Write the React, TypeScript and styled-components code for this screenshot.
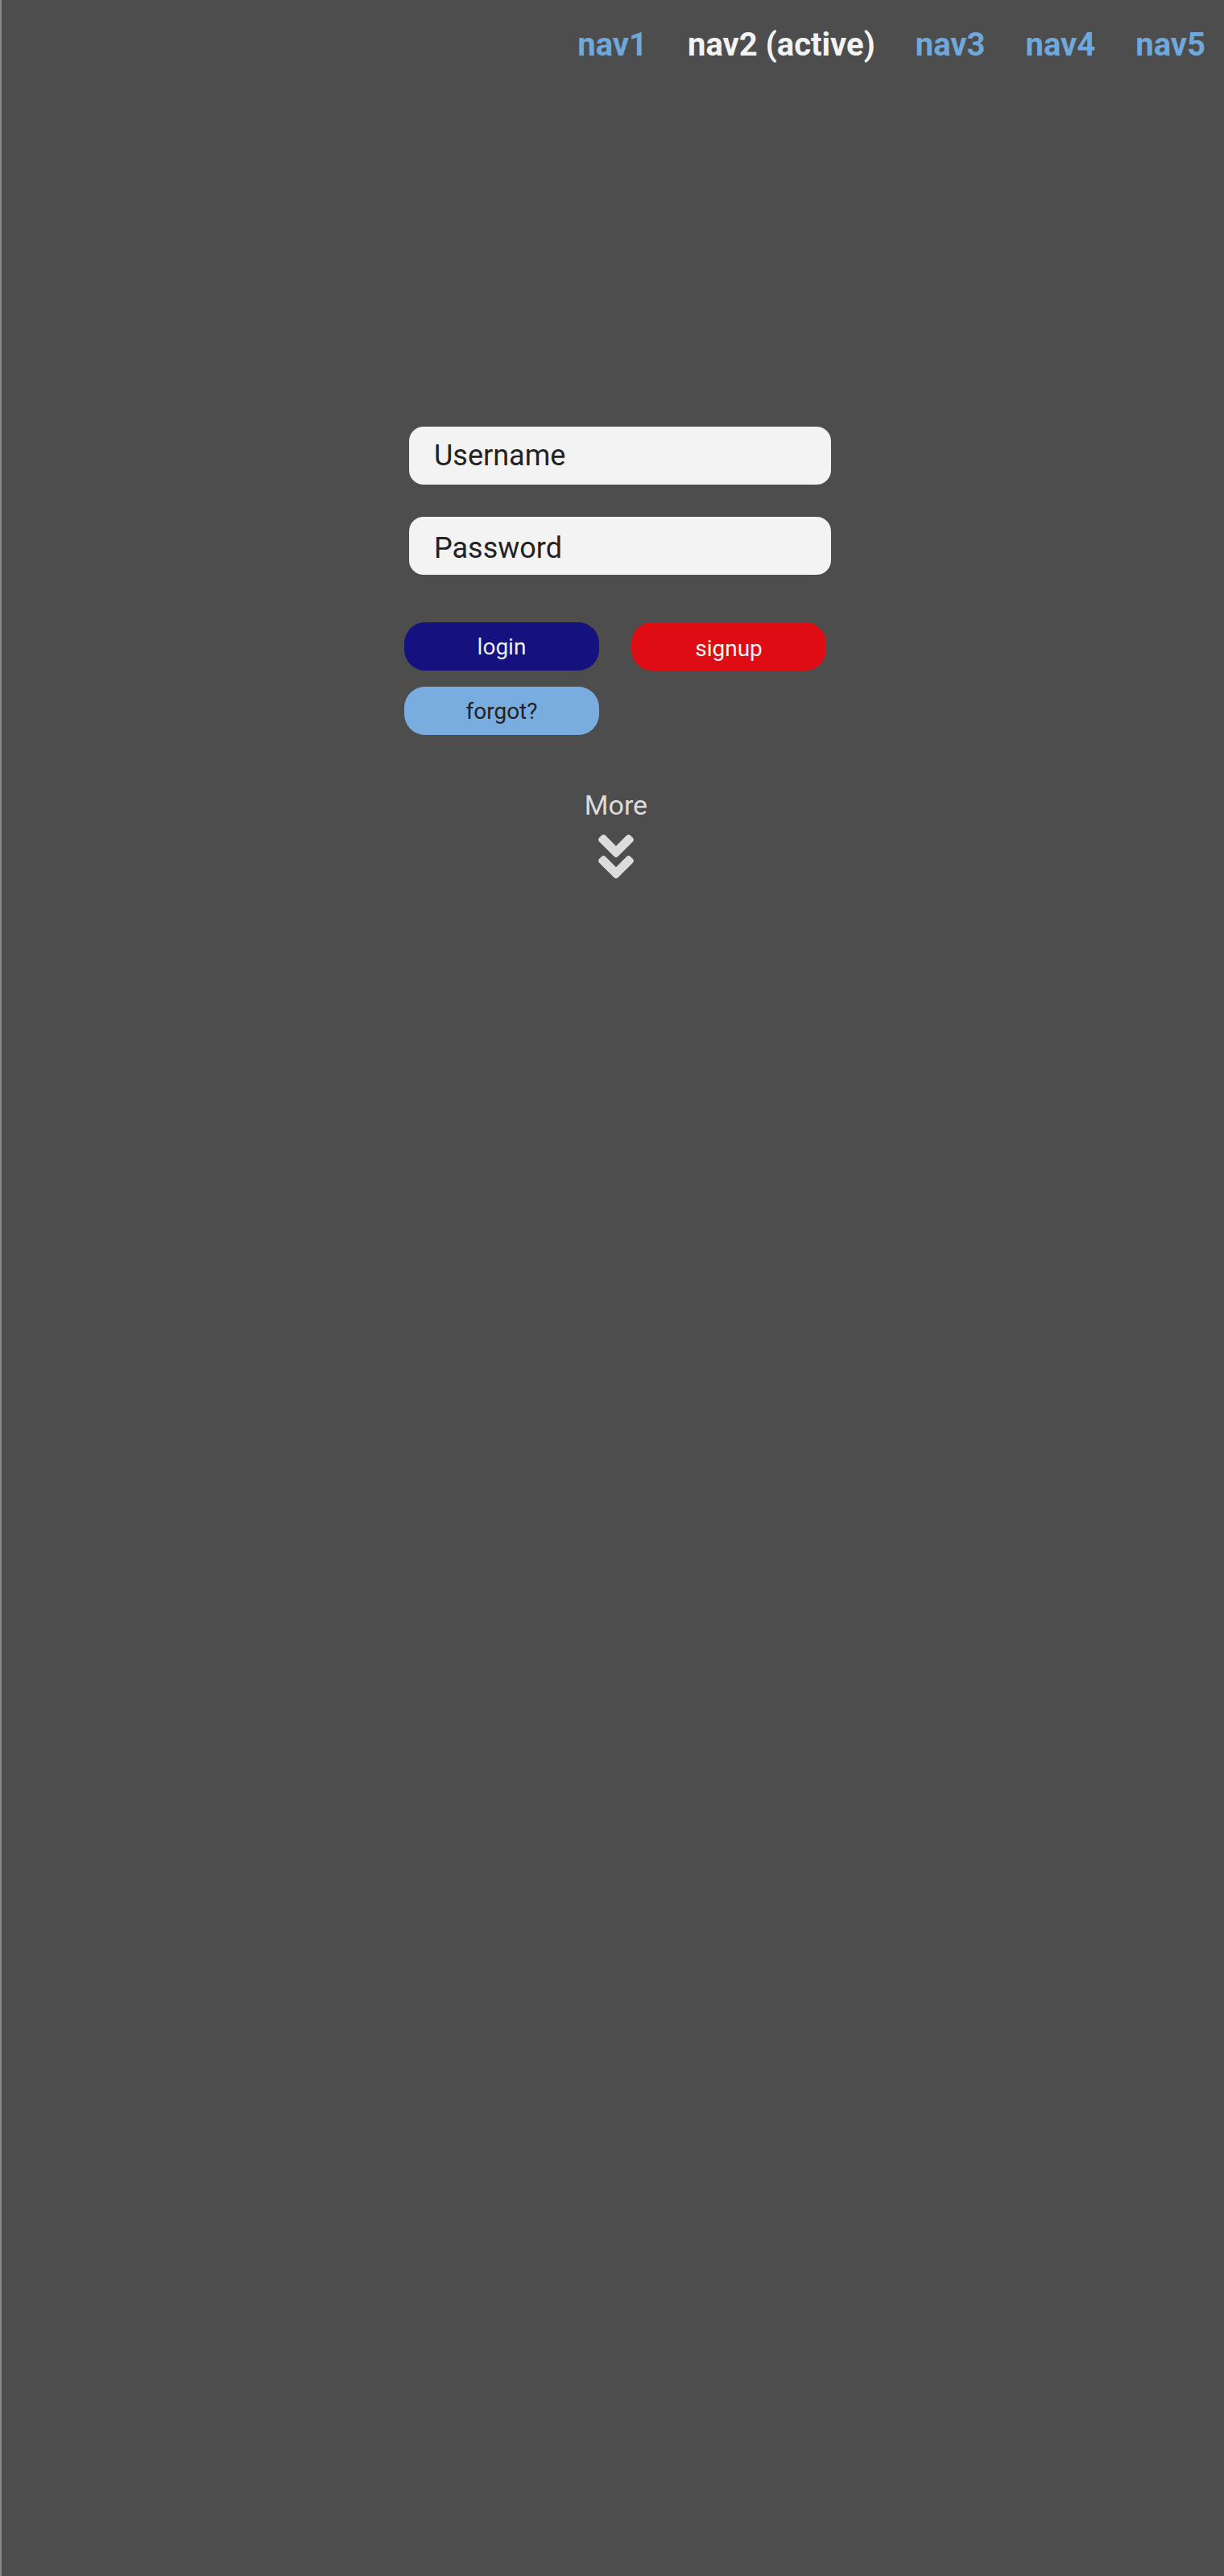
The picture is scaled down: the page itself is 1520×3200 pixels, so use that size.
import React from "react";
import styled, { createGlobalStyle } from "styled-components";
import { FaAngleDoubleDown } from "react-icons/fa";

const GlobalStyle = createGlobalStyle`
  html, body {
    margin: 0;
    padding: 0;
  }
  body {
    background: #4d4d4d;
    border-left: 2px solid #888888;
    font-family: Roboto, "Liberation Sans", Arial, sans-serif;
  }
  * { box-sizing: border-box; }
`;

const Page = styled.div`
  min-height: 3200px;
  display: flex;
  flex-direction: column;
`;

const Nav = styled.nav`
  display: flex;
  justify-content: flex-end;
  gap: 50px;
  padding: 32px 23px 0 0;
`;

const NavLink = styled.a<{ $active?: boolean }>`
  font-size: 40px;
  line-height: normal;
  font-weight: 700;
  text-decoration: none;
  color: ${(p) => (p.$active ? "#f3f3f3" : "#6fa8dc")};
  cursor: pointer;
`;

const Form = styled.form`
  width: 530px;
  margin: 451px 0 0 calc(50% - 259px);
  display: flex;
  flex-direction: column;
`;

const Field = styled.input<{ $drop?: number }>`
  width: 524px;
  height: 72px;
  margin: 0 0 0 6px;
  padding: ${(p) => p.$drop ?? 0}px 0 0 31px;
  border: none;
  border-radius: 18px;
  background: #f3f3f3;
  font-family: Roboto, "Liberation Sans", Arial, sans-serif;
  font-size: 36px;
  color: #222;
  outline: none;
  & + & {
    margin-top: 40px;
  }
  &::placeholder {
    color: #222;
    opacity: 1;
  }
`;

const Buttons = styled.div`
  display: grid;
  grid-template-columns: 242px 242px;
  column-gap: 40px;
  row-gap: 20px;
  margin-top: 59px;
`;

const Button = styled.button<{ $bg: string; $fg: string; $drop?: number }>`
  height: 60px;
  border: none;
  border-radius: 26px;
  background: ${(p) => p.$bg};
  color: ${(p) => p.$fg};
  font-family: Roboto, "Liberation Sans", Arial, sans-serif;
  font-size: 28px;
  padding: ${(p) => p.$drop ?? 0}px 0 0;
  cursor: pointer;
`;

const More = styled.div`
  width: 526px;
  margin-top: 67px;
  display: flex;
  flex-direction: column;
  align-items: center;
  color: #dcdcdc;
`;

const MoreLabel = styled.span`
  font-size: 34px;
  font-weight: 400;
  line-height: normal;
`;

const Chevrons = styled(FaAngleDoubleDown)`
  display: block;
  margin-top: 9px;
  color: #dcdcdc;
`;

export default function App() {
  const links = ["nav1", "nav2 (active)", "nav3", "nav4", "nav5"];
  return (
    <>
      <GlobalStyle />
      <Page>
        <Nav>
          {links.map((l) => (
            <NavLink key={l} $active={l.includes("active")}>
              {l}
            </NavLink>
          ))}
        </Nav>
        <Form onSubmit={(e) => e.preventDefault()}>
          <Field type="text" placeholder="Username" />
          <Field type="password" placeholder="Password" $drop={6} />
          <Buttons>
            <Button type="button" $bg="#15127f" $fg="#eeeeee">
              login
            </Button>
            <Button type="button" $bg="#df0c13" $fg="#f4f4f4" $drop={5}>
              signup
            </Button>
            <Button type="button" $bg="#7aaddf" $fg="#222222">
              forgot?
            </Button>
          </Buttons>
          <More>
            <MoreLabel>More</MoreLabel>
            <Chevrons size={70} />
          </More>
        </Form>
      </Page>
    </>
  );
}
